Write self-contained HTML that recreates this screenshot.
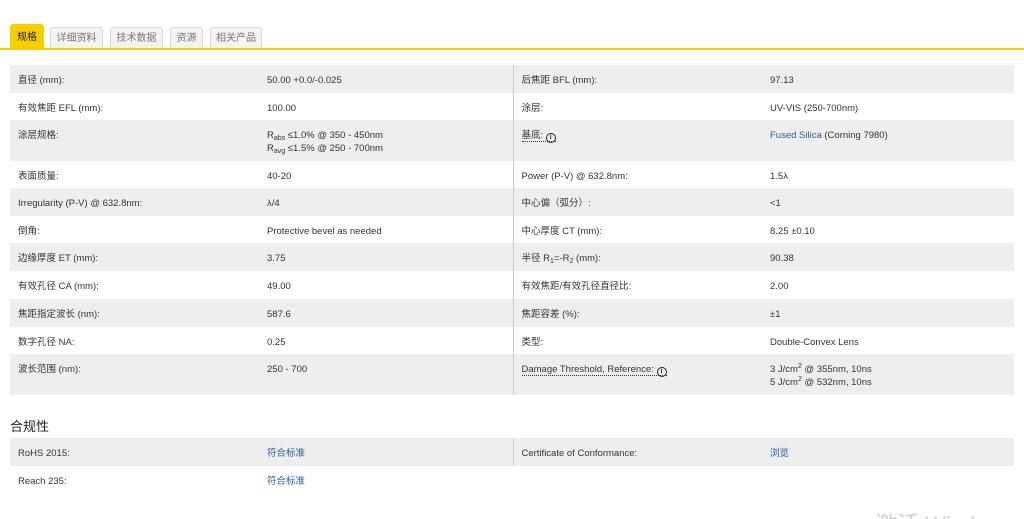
<!DOCTYPE html>
<html><head><meta charset="utf-8"><style>
*{margin:0;padding:0;box-sizing:border-box}
html,body{width:1024px;height:519px;overflow:hidden}
body{background:#fff;font-family:"Liberation Sans","Noto Sans CJK SC",sans-serif;font-size:9.5px;color:#333;position:relative}
.tabs{position:absolute;left:10px;top:24px;height:24px}
.tab{position:absolute;top:3px;height:22px;background:#f3f3f3;border:1px solid #d8d8d8;border-bottom:none;border-radius:3px 3px 0 0;color:#777;font-size:10px;line-height:22px;text-align:center}
.tab.on{top:0;height:25px;background:#f7cf00;border:none;color:#222;line-height:27px}
.line{position:absolute;left:0;top:48px;width:1024px;height:2px;background:#f7cf00}
table{position:absolute;left:10px;width:1004px;border-collapse:collapse;table-layout:fixed}
td{vertical-align:top;padding-top:9px;line-height:13px}
td.a{padding-left:8px;width:257px}
td.b{width:246px;border-right:1px solid #ccc}
td.c{padding-left:8px;width:257px}
tr.g{background:#eee}
a{color:#2a5aa0;text-decoration:none}
.dot{border-bottom:1px dotted #333}
.i{display:inline-block;width:10px;height:10px;border:1.5px solid #222;border-radius:50%;font-size:7px;line-height:7px;text-align:center;font-weight:bold;vertical-align:-1px}
sub{font-size:7px;vertical-align:-2px;line-height:0}
sup{font-size:7px;line-height:0}
h3{position:absolute;left:10px;top:416px;font-size:13px;font-weight:normal;color:#222}
.wm{position:absolute;left:875px;top:507px;font-size:22px;color:#cfcfcf}
</style></head><body>
<div class="tabs">
<div class="tab on" style="left:0;width:34px">规格</div>
<div class="tab" style="left:40px;width:53px">详细资料</div>
<div class="tab" style="left:100px;width:53px">技术数据</div>
<div class="tab" style="left:160px;width:33px">资源</div>
<div class="tab" style="left:200px;width:52px">相关产品</div>
</div>
<div class="line"></div>
<table style="top:65px">
<tr class="g" style="height:28px"><td class="a">直径 (mm):</td><td class="b">50.00 +0.0/-0.025</td><td class="c">后焦距 BFL (mm):</td><td>97.13</td></tr>
<tr style="height:27px"><td class="a">有效焦距 EFL (mm):</td><td class="b">100.00</td><td class="c">涂层:</td><td>UV-VIS (250-700nm)</td></tr>
<tr class="g" style="height:41px"><td class="a">涂层规格:</td><td class="b">R<sub>abs</sub> ≤1.0% @ 350 - 450nm<br>R<sub>avg</sub> ≤1.5% @ 250 - 700nm</td><td class="c"><span class="dot">基底: <span class="i">i</span></span></td><td><a>Fused Silica</a> (Corning 7980)</td></tr>
<tr style="height:27px"><td class="a">表面质量:</td><td class="b">40-20</td><td class="c">Power (P-V) @ 632.8nm:</td><td>1.5λ</td></tr>
<tr class="g" style="height:28px"><td class="a">Irregularity (P-V) @ 632.8nm:</td><td class="b">λ/4</td><td class="c">中心偏（弧分）:</td><td>&lt;1</td></tr>
<tr style="height:27px"><td class="a">倒角:</td><td class="b">Protective bevel as needed</td><td class="c">中心厚度 CT (mm):</td><td>8.25 ±0.10</td></tr>
<tr class="g" style="height:28px"><td class="a">边缘厚度 ET (mm):</td><td class="b">3.75</td><td class="c">半径 R<sub>1</sub>=-R<sub>2</sub> (mm):</td><td>90.38</td></tr>
<tr style="height:28px"><td class="a">有效孔径 CA (mm):</td><td class="b">49.00</td><td class="c">有效焦距/有效孔径直径比:</td><td>2.00</td></tr>
<tr class="g" style="height:28px"><td class="a">焦距指定波长 (nm):</td><td class="b">587.6</td><td class="c">焦距容差 (%):</td><td>±1</td></tr>
<tr style="height:27px"><td class="a">数字孔径 NA:</td><td class="b">0.25</td><td class="c">类型:</td><td>Double-Convex Lens</td></tr>
<tr class="g" style="height:41px"><td class="a">波长范围 (nm):</td><td class="b">250 - 700</td><td class="c"><span class="dot">Damage Threshold, Reference: <span class="i">i</span></span></td><td>3 J/cm<sup>2</sup> @ 355nm, 10ns<br>5 J/cm<sup>2</sup> @ 532nm, 10ns</td></tr>
</table>
<h3>合规性</h3>
<table style="top:438px">
<tr class="g" style="height:28px"><td class="a">RoHS 2015:</td><td class="b"><a>符合标准</a></td><td class="c">Certificate of Conformance:</td><td><a>浏览</a></td></tr>
<tr style="height:27px"><td class="a">Reach 235:</td><td class="b" style="border-right:none"><a>符合标准</a></td><td class="c"></td><td></td></tr>
</table>
<div class="wm">激活 Windows</div>
</body></html>
